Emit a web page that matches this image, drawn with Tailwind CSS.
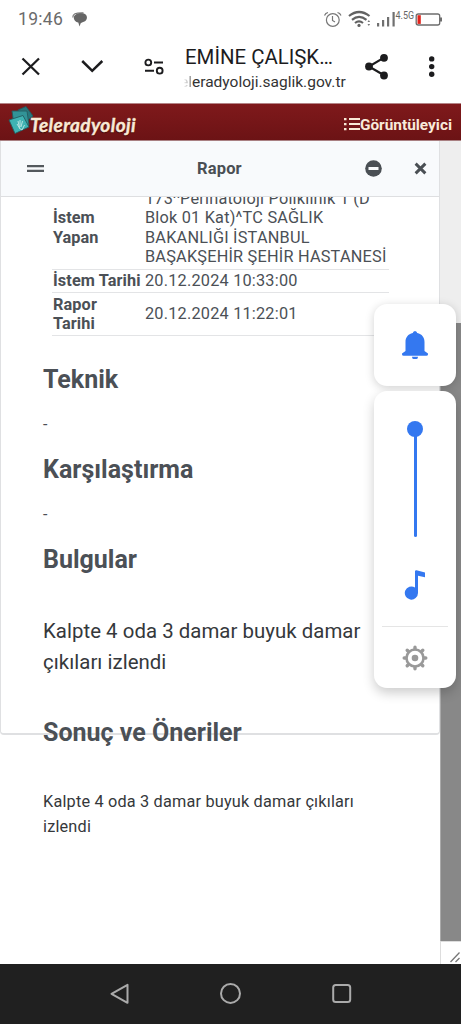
<!DOCTYPE html>
<html lang="tr">
<head>
<meta charset="utf-8">
<title>Teleradyoloji</title>
<script src="https://cdn.jsdelivr.net/npm/@tailwindcss/browser@4"></script>
</head>
<body class="relative flex h-[1024px] w-[461px] flex-col overflow-hidden bg-white font-['Roboto',sans-serif]">

<!-- status bar -->
<div class="flex h-[38px] shrink-0 items-center pl-[18px] pr-[18px]">
  <span class="mt-[2px] w-[45px] whitespace-nowrap text-[17.5px] leading-none tracking-[0.3px] text-[#6b6b6b]">19:46</span>
  <svg class="ml-[9px] h-[15px] w-4" viewBox="0 0 16 15"><path d="M6 1.500C8 .8 11 .9 13 2C15.500 3.500 15.700 7.500 13 9.300C11.500 10.300 9.500 10.400 8.700 11.200L7.500 14.500L6.300 10.500C3 10 1.200 7 2 4.500C2.500 3 4 2 6 1.500Z" fill="#666"/><path d="M.8 5.500C.7 2 3 .6 11.500 .8" fill="none" stroke="#777" stroke-width="1.200"/></svg>
  <span class="grow"></span>
  <svg class="h-[18px] w-[120px]" viewBox="0 0 120 18">
    <g fill="none" stroke="#777" stroke-width="1.200"><circle cx="9.800" cy="10" r="6.400"/><path d="M9.500 6v4.500l2.500 1.500M1.500 5.500Q2.500 3 5 2.500M14.500 2.500Q17 3 18 5.500"/></g>
    <g fill="none" stroke="#626262" stroke-width="2.200"><path d="M26 6Q36 -2 46.500 6M29 9.800Q36 4 43.500 9.800M32 13Q36 9.800 40 13"/></g>
    <circle cx="36" cy="15.400" r="1.600" fill="#626262"/>
    <path d="M44.500 12l1.300-2 1.300 2zM44.500 14l1.300 2 1.300-2z" fill="#777"/>
    <path d="M54 13h2.200v3.500H54zM59 10h2.200v6.500H59zM64 7h2.200v9.500H64zM69.500 2h2.200v14.500h-2.200z" fill="#707070"/>
    <text x="72.500" y="8.500" font-family="Roboto" font-size="10" fill="#666" textLength="18.500" lengthAdjust="spacingAndGlyphs">4.5G</text>
    <rect x="93.200" y="4" width="23.500" height="11" rx="2" fill="none" stroke="#6d6d6d" stroke-width="1.300"/>
    <path d="M117 7.500h2v4h-2z" fill="#6d6d6d"/><path d="M94.500 5.200h3.300v8.700h-3.300z" fill="#e3231b"/>
  </svg>
</div>

<!-- browser toolbar -->
<div class="flex h-[65px] shrink-0 items-start pl-[21px]">
  <svg class="mt-[19px] h-5 w-5 shrink-0" viewBox="0 0 20 20"><path d="M1.500 1.500l16.500 16M18 1.500l-16.500 16" stroke="#1c1c1e" stroke-width="2.300"/></svg>
  <svg class="ml-10 mt-[21px] h-4 w-6 shrink-0" viewBox="0 0 24 16"><path d="M1.200 2L11.200 11.800L21.300 2" fill="none" stroke="#1c1c1e" stroke-width="2.500"/></svg>
  <svg class="ml-[38px] mt-[20px] h-[18px] w-[22px] shrink-0" viewBox="0 0 22 18"><g fill="none" stroke="#1c1c1e" stroke-width="1.900"><circle cx="5.300" cy="4.500" r="2.900"/><circle cx="16.700" cy="12.700" r="2.900"/><path d="M11 4.500h9M2 12.700h9"/></g></svg>
  <div class="ml-[20px] w-[163px] shrink-0 pt-[7px]">
    <div class="whitespace-nowrap text-[20.4px] leading-[25px] text-[#1c1c1e]">EMİNE ÇALIŞK…</div>
    <div class="-ml-[5px] mt-px whitespace-nowrap text-[15.5px] leading-[22px] text-[#333]"><span class="bg-gradient-to-r from-white from-30% to-[#777] bg-clip-text text-transparent">el</span>eradyoloji.saglik.gov.tr</div>
  </div>
  <svg class="ml-[16px] mt-[14px] h-7 w-[26px] shrink-0" viewBox="0 0 26 28"><path d="M20 5.600L5 14.500L20 23.300" fill="none" stroke="#1c1c1e" stroke-width="2.200"/><g fill="#1c1c1e"><circle cx="20" cy="5.800" r="3.900"/><circle cx="5" cy="14.500" r="3.900"/><circle cx="20" cy="23.500" r="3.900"/></g></svg>
  <svg class="ml-[38px] mt-[17px] h-[23px] w-2 shrink-0" viewBox="0 0 8 23"><g fill="#1c1c1e"><circle cx="3.700" cy="3.900" r="2.700"/><circle cx="3.700" cy="11.600" r="2.700"/><circle cx="3.700" cy="19.300" r="2.700"/></g></svg>
</div>

<!-- application bar -->
<header class="flex h-[38px] shrink-0 items-start border-y border-t-[#b48486] border-b-[#a98082] bg-gradient-to-b from-[#7f191b] to-[#6c1315] pl-2">
  <svg class="mt-[1px] h-8 w-[25px] shrink-0" viewBox="0 0 25 32"><g stroke="#245b60" stroke-width=".9"><path d="M10 5L18 1.500L25 11L16 18z" fill="#28777d"/><path d="M4 6L19 6L21 20L6 20z" fill="#329397"/><path d="M1 15L15 10.500L21 22L7 28.500z" fill="#3fb3b3"/></g><path d="M9 19L11.500 23L10 16M12 22L12 15M13 22L14.500 16M11 23L14 25L16.500 20" fill="none" stroke="#b5e3e1" stroke-width="1"/></svg>
  <span class="-ml-[3px] mt-[9px] whitespace-nowrap font-['Lato',sans-serif] text-[19px] font-bold italic leading-6 tracking-[0.4px] text-[#f9e9d6] [-webkit-text-stroke:0.4px_#f9e9d6] [text-shadow:0_1px_1px_#300]">Teleradyoloji</span>
  <span class="grow"></span>
  <svg class="mt-[13px] h-[15px] w-4 shrink-0" viewBox="0 0 16 15"><path d="M0 1h2.500v2.300H0zM5 1h11v2H5zM0 6h2.500v2.300H0zM5 6h11v2H5zM0 11h2.500v2.300H0zM5 11h11v2H5z" fill="#f9e9d6"/></svg>
  <span class="mr-[9px] mt-[10px] whitespace-nowrap text-[15.4px] font-bold leading-[22px] text-[#f9eadb]">Görüntüleyici</span>
</header>

<!-- page -->
<main class="flex h-[823px] shrink-0">
  <section class="h-[594px] w-[440px] shrink-0 rounded-b border-x border-b-2 border-[#dfe0e2]">
    <div class="flex h-[56px] items-center border-b border-[#dedfe1] bg-[#f8fafc]">
      <svg class="ml-[26px] h-2 w-[17px]" viewBox="0 0 17 8"><path d="M0 0h17v2.200H0zM0 4.800h17v2.200H0z" fill="#54595d"/></svg>
      <h1 class="ml-[153px] mt-[2px] w-[47px] text-[16.5px] font-bold tracking-[0.15px] text-[#4a4f54]">Rapor</h1>
      <svg class="ml-[121px] h-[17px] w-[17px]" viewBox="0 0 17 17"><circle cx="8.500" cy="8.500" r="8.300" fill="#4a4f54"/><path d="M3.500 7h10v3h-10z" fill="#f8fafc"/></svg>
      <svg class="ml-[32px] h-[13px] w-[13px]" viewBox="0 0 12 12"><path d="M1.500 1.500l9 9M10.500 1.500l-9 9" stroke="#4a4f54" stroke-width="2.700"/></svg>
    </div>
    <div class="h-[139px] overflow-hidden pl-[51px] text-[16.300px] leading-[19.300px] text-[#4b5056]">
      <div class="-mt-[10px] w-[337px]">
        <div class="flex h-[83px] items-center border-b border-[#e3e4e6] pb-[1px] pl-px">
          <div class="w-[92px] shrink-0 font-bold">İstem<br>Yapan</div>
          <div class="whitespace-nowrap tracking-[0.21px]">173^Perinatoloji Poliklinik 1 (D<br>Blok 01 Kat)^TC SAĞLIK<br>BAKANLIĞI İSTANBUL<br>BAŞAKŞEHİR ŞEHİR HASTANESİ</div>
        </div>
        <div class="flex h-[23px] items-center border-b border-[#e3e4e6] pl-px">
          <div class="w-[92px] shrink-0 whitespace-nowrap font-bold tracking-[0.1px]">İstem Tarihi</div>
          <div class="tracking-[0.21px]">20.12.2024 10:33:00</div>
        </div>
        <div class="flex h-[43px] items-center border-b border-[#e3e4e6] pl-px">
          <div class="w-[92px] shrink-0 font-bold tracking-[0.1px]">Rapor<br>Tarihi</div>
          <div class="tracking-[0.21px]">20.12.2024 11:22:01</div>
        </div>
      </div>
    </div>
    <div class="w-[370px] pl-[42px] text-[#4b5056]">
      <h2 class="mt-[28px] whitespace-nowrap text-[25px] font-bold leading-[32px]">Teknik</h2>
      <p class="mt-[17px] text-[16px] leading-6">-</p>
      <h2 class="mt-[17px] whitespace-nowrap text-[25px] font-bold leading-[32px]">Karşılaştırma</h2>
      <p class="mt-[17px] text-[16px] leading-6">-</p>
      <h2 class="mt-[17px] whitespace-nowrap text-[25px] font-bold leading-[32px]">Bulgular</h2>
      <p class="mt-[40px] whitespace-nowrap text-[20.400px] leading-[30.500px] tracking-[0.04px] text-[#35383b]">Kalpte 4 oda 3 damar buyuk damar<br>çıkıları izlendi</p>
      <h2 class="mt-[40px] whitespace-nowrap text-[25px] font-bold leading-[32px]">Sonuç ve Öneriler</h2>
      <p class="mt-[40px] whitespace-nowrap text-[16.300px] leading-[25px] tracking-[0.18px] text-[#35383b]">Kalpte 4 oda 3 damar buyuk damar çıkıları<br>izlendi</p>
    </div>
  </section>
  <aside class="flex w-[21px] flex-col">
    <div class="h-[182px] bg-[#eee]"></div>
    <div class="h-[618px] border-l border-[#aaa] bg-[#888]"></div>
    <div class="flex grow items-end justify-end border-l border-t border-[#ddd]">
      <svg class="mb-[1px] h-[12px] w-[12px]" viewBox="0 0 12 12"><path d="M1.500 11L10.500 1.500M6.500 11L10.500 7" stroke="#777" stroke-width="1.300"/></svg>
    </div>
  </aside>
</main>

<!-- system navigation -->
<nav class="flex h-[60px] shrink-0 items-center bg-[#202020] pl-[109px]">
  <svg class="h-6 w-[23px]" viewBox="0 0 23 24"><path d="M18.500 2.800V20.800L2.500 11.800z" fill="none" stroke="#aaa" stroke-width="2" stroke-linejoin="round"/></svg>
  <svg class="ml-[87px] h-6 w-6" viewBox="0 0 24 24"><circle cx="11.500" cy="11.400" r="9.500" fill="none" stroke="#aaa" stroke-width="2"/></svg>
  <svg class="ml-[87px] h-6 w-6" viewBox="0 0 24 24"><rect x="3.200" y="2.900" width="17" height="17" rx="2.500" fill="none" stroke="#aaa" stroke-width="2"/></svg>
</nav>

<!-- volume overlay -->
<div class="absolute left-[374px] top-[304px] flex w-[82px] flex-col gap-[5px]">
  <div class="flex h-[82px] items-center justify-center rounded-[13px] bg-white shadow-[0_2px_10px_rgba(0,0,0,0.18)]">
    <svg class="h-7 w-7" viewBox="0 0 28 28"><path d="M14 0Q16 .3 16.200 2C21 3 23.500 6.500 23.500 11V20L27 22.500Q27.500 24.700 25.500 24.700H2.500Q.5 24.700 1 22.500L4.500 20V11C4.500 6.500 7 3 11.800 2Q12 .3 14 0ZM11 25.700h6q0 2.300-1.500 2.300h-3Q11 28 11 25.700z" fill="#3478f0"/></svg>
  </div>
  <div class="flex h-[297px] flex-col items-center rounded-[13px] bg-white shadow-[0_5px_12px_rgba(0,0,0,0.2)]">
    <div class="mt-[30px] size-4 rounded-full bg-[#3478f0]"></div>
    <div class="-mt-px h-[101px] w-[3px] rounded-b-full bg-[#3478f0]"></div>
    <svg class="mt-[33px] h-[30px] w-[22px]" viewBox="0 0 22 30"><path d="M11 1Q11.500 0 12.500 .3L21 2.500V7.300L14 5.800V23A6.600 6.600 0 1 1 11 17.500z" fill="#3478f0"/></svg>
    <div class="mt-[26px] h-px w-[66px] bg-[#e5e5e5]"></div>
    <svg class="mt-[18px] h-[26px] w-[26px]" viewBox="0 0 26 26"><circle cx="13" cy="13" r="8.500" fill="none" stroke="#999" stroke-width="2.600"/><circle cx="13" cy="13" r="3.300" fill="#999"/><path d="M13 2.200v1.500M13 22.300v1.500M2.200 13h1.500M22.300 13h1.500M5.200 5.200l.8.800M20 20l.8.800M5.200 20.800l.8-.8M20 6l.8-.8" stroke="#999" stroke-width="3.400" stroke-linecap="round"/></svg>
  </div>
</div>
</body>
</html>
